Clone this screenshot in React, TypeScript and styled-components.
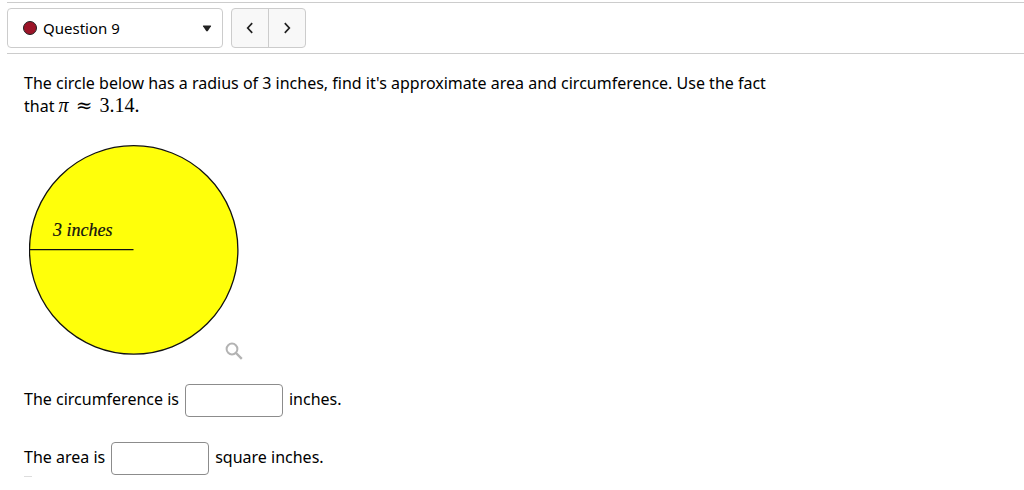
import styled, { createGlobalStyle } from 'styled-components';
import { useState } from 'react';


const answers = [
    { id: 'circumference', before: 'The circumference is', after: 'inches.' },
    { id: 'area', before: 'The area is', after: 'square inches.' },
];


const CircleFigure = () => (
    <svg width="210" height="210" viewBox="0 0 210 210" role="img" aria-label="Circle with a radius of 3 inches">
        <circle cx="104.7" cy="104.9" r="104.2" fill="#ffff0a" stroke="#111" strokeWidth="1.3"/>
        <path d="M1 104.6H104.5" stroke="#111" strokeWidth="1.4"/>
        <FigureLabel x="24" y="91">3 inches</FigureLabel>
    </svg>
);

const App = () => {
    const [question, setQuestion] = useState('9');
    const [values, setValues] = useState<Record<string, string>>({});

    return (
        <>
            <GlobalStyle/>
            <Toolbar>
                <QuestionPicker>
                    <StatusDot/>
                    <QuestionSelect
                        aria-label="Question"
                        value={question}
                        onChange={(e) => setQuestion(e.target.value)}
                    >
                        <option value="9">Question 9</option>
                    </QuestionSelect>
                    <Caret width="10" height="7" viewBox="0 0 10 7">
                        <path d="M1.5 .5H8.5Q9.5 .5 9 1.3L5.8 6Q5 6.8 4.2 6L1 1.3Q.5 .5 1.5 .5Z" fill="#222"/>
                    </Caret>
                </QuestionPicker>
                <Pager>
                    <PagerButton aria-label="Previous question">
                        <svg width="8" height="12" viewBox="0 0 8 12">
                            <path d="M6.2 1.2L1.7 6L6.2 10.8" fill="none" stroke="#222" strokeWidth="1.7"/>
                        </svg>
                    </PagerButton>
                    <PagerButton aria-label="Next question">
                        <svg width="8" height="12" viewBox="0 0 8 12">
                            <path d="M1.8 1.2L6.3 6L1.8 10.8" fill="none" stroke="#222" strokeWidth="1.7"/>
                        </svg>
                    </PagerButton>
                </Pager>
            </Toolbar>

            <Content>
                <Prompt>
                    The circle below has a radius of 3 inches, find it's approximate area and circumference. Use the
                    fact that{' '}
                    <MathText>
                        <i>π</i>
                        <Relation>≈</Relation>
                        <span>3.14.</span>
                    </MathText>
                </Prompt>

                <Figure>
                    <CircleFigure/>
                    <ZoomButton aria-label="Enlarge figure">
                        <svg width="18" height="18" viewBox="0 0 18 18" fill="none" stroke="#b3b3b3">
                            <circle cx="7" cy="7" r="5.4" strokeWidth="2"/>
                            <path d="M11 11L16.8 16.8" strokeWidth="2.4"/>
                        </svg>
                    </ZoomButton>
                </Figure>

                <Answers>
                    {answers.map(({ id, before, after }) => (
                        <AnswerRow key={id}>
                            <label htmlFor={id}>{before}</label>
                            <AnswerInput
                                id={id}
                                value={values[id] ?? ''}
                                onChange={(e) => setValues({ ...values, [id]: e.target.value })}
                            />
                            <span>{after}</span>
                        </AnswerRow>
                    ))}
                </Answers>
                <Divider/>
            </Content>
        </>
    );
};

const GlobalStyle = createGlobalStyle`
  * {
    box-sizing: border-box;
  }
  body {
    margin: 0;
    background: #fff;
    color: #000;
    font: 16px/23px 'Noto Sans', sans-serif;
  }
  button, input, select {
    margin: 0;
    font: inherit;
    color: inherit;
  }
`;

const Toolbar = styled.header`
  display: flex;
  gap: 8px;
  margin: 2px 0 0 7px;
  padding: 5px 0;
  border-top: 1px solid #ccc;
  border-bottom: 1px solid #ccc;
`;

const QuestionPicker = styled.div`
  position: relative;
  display: flex;
  align-items: center;
  width: 216px;
  height: 40px;
  border: 1px solid #ccc;
  border-radius: 4px;
`;

const QuestionSelect = styled.select`
  appearance: none;
  width: 100%;
  height: 100%;
  padding: 0 32px 0 35px;
  border: none;
  border-radius: 4px;
  background: transparent;
  font-size: 15px;
`;

const StatusDot = styled.span`
  position: absolute;
  left: 15px;
  width: 14px;
  height: 14px;
  border: 1px solid #222;
  border-radius: 50%;
  background: #9c1428;
  pointer-events: none;
`;

const Caret = styled.svg`
  position: absolute;
  right: 10px;
  pointer-events: none;
`;

const Pager = styled.nav`
  display: flex;
  height: 40px;
  border: 1px solid #ccc;
  border-radius: 4px;
  background: #f8f8f8;
`;

const PagerButton = styled.button`
  display: flex;
  align-items: center;
  justify-content: center;
  width: 36px;
  padding: 0;
  border: none;
  background: none;
  & + & {
    width: 37px;
    border-left: 1px solid #ccc;
  }
`;

const Content = styled.main`
  padding: 18px 24px 0;
`;

const Prompt = styled.p`
  max-width: 776px;
  margin: 0;
`;

const MathText = styled.span`
  display: inline-flex;
  align-items: baseline;
  gap: 7px;
  font-family: 'Liberation Serif', serif;
  font-size: 20px;
  line-height: 20px;
`;

const Relation = styled.span`
  font-family: 'DejaVu Serif', serif;
`;

const Figure = styled.div`
  display: flex;
  align-items: flex-end;
  margin-top: 27px;
  padding-left: 5px;
  svg {
    display: block;
  }
`;

const FigureLabel = styled.text`
  font: italic 18px 'Liberation Serif', serif;
  fill: #111;
  stroke: #111;
  stroke-width: 0.2px;
`;

const ZoomButton = styled.button`
  margin: 0 0 -5px -14px;
  padding: 0;
  border: none;
  background: none;
`;

const Answers = styled.div`
  display: grid;
  gap: 25px;
  margin-top: 29px;
`;

const AnswerRow = styled.div`
  display: flex;
  align-items: center;
  gap: 6px;
  label, span {
    padding-bottom: 2px;
  }
`;

const AnswerInput = styled.input`
  width: 98px;
  height: 33px;
  padding: 0 8px;
  border: 1px solid #8c8c8c;
  border-radius: 4px;
`;

const Divider = styled.hr`
  width: 8px;
  margin: 1px 0 0;
  border: none;
  border-top: 1px solid #ddd;
`;

export default App;
